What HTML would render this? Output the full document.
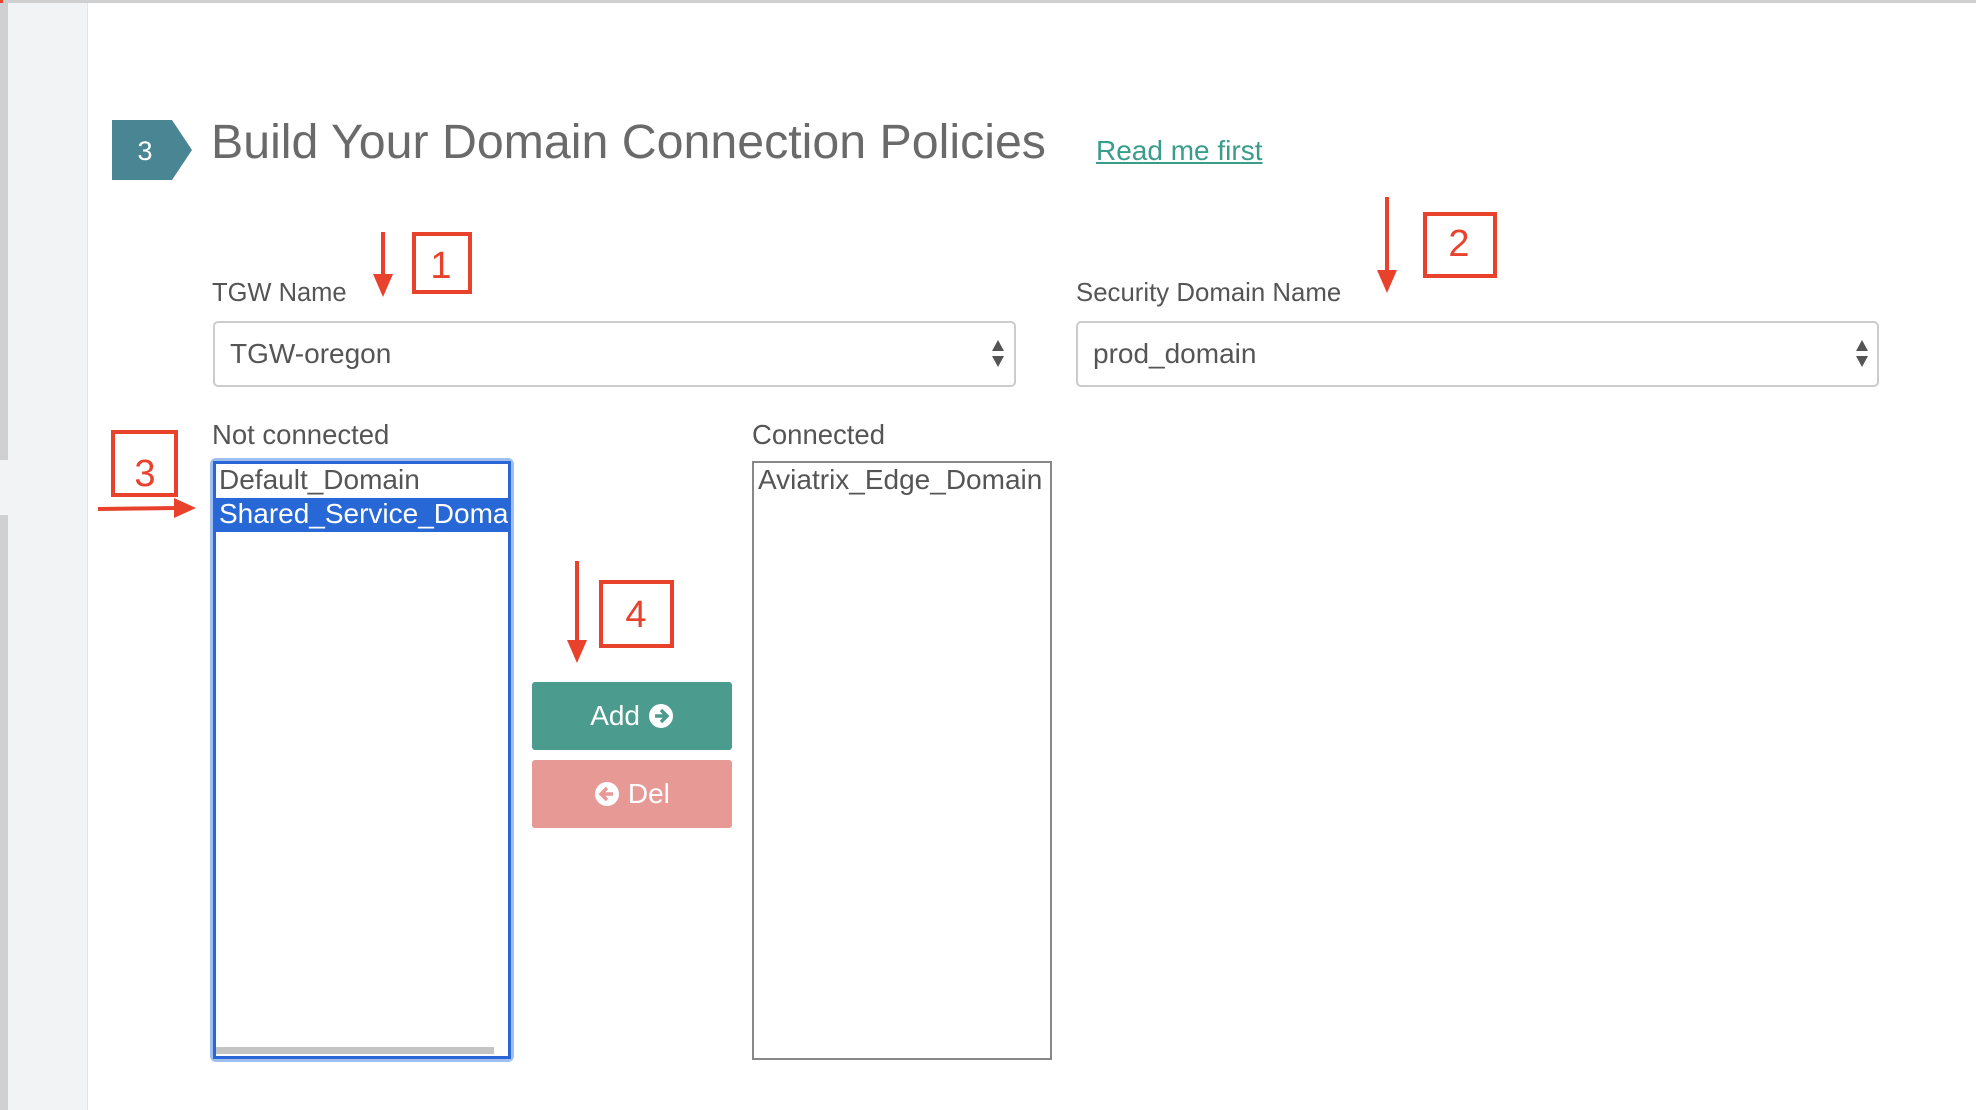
<!DOCTYPE html>
<html><head><meta charset="utf-8"><style>
*{margin:0;padding:0;box-sizing:border-box}
body{width:1976px;height:1110px;background:#fff;position:relative;overflow:hidden;font-family:"Liberation Sans",Helvetica,Arial,sans-serif;color:#555}
.a{position:absolute}
</style></head><body>
<div class="a" style="left:0;top:0;width:88px;height:1110px;background:#f2f3f5;border-right:1px solid #e4e4e4"></div>
<div class="a" style="left:0;top:0;width:8px;height:460px;background:#d0d0d2"></div>
<div class="a" style="left:0;top:515px;width:8px;height:595px;background:#d0d0d2"></div>
<div class="a" style="left:0;top:0;width:1976px;height:3px;background:#cfcfcf"></div>
<div class="a" style="left:0;top:0;width:3px;height:3px;background:#e8412c"></div>

<svg class="a" style="left:112px;top:120px" width="82" height="60"><polygon points="0,0 60,0 80,30 60,60 0,60" fill="#4a8594"/><text x="33" y="40" font-size="27" fill="#fff" text-anchor="middle" font-family="Liberation Sans">3</text></svg>
<div class="a" style="left:211px;top:114px;font-size:48.3px;color:#6a6a6a;white-space:nowrap;line-height:56px">Build Your Domain Connection Policies</div>
<div class="a" style="left:1096px;top:135px;font-size:28px;color:#3a9c8a;text-decoration:underline;line-height:32px">Read me first</div>

<div class="a" style="left:212px;top:279px;font-size:25.5px;color:#555">TGW Name</div>
<div class="a" style="left:1076px;top:279px;font-size:25.8px;color:#555">Security Domain Name</div>

<div class="a" style="left:213px;top:321px;width:803px;height:66px;border:2px solid #ccc;border-radius:5px"></div>
<div class="a" style="left:230px;top:338px;font-size:28px;color:#555">TGW-oregon</div>
<svg class="a" style="left:991px;top:339px" width="14" height="30"><polygon points="7,1 13,12 1,12" fill="#555"/><polygon points="1,17 13,17 7,28" fill="#555"/></svg>
<div class="a" style="left:1076px;top:321px;width:803px;height:66px;border:2px solid #ccc;border-radius:5px"></div>
<div class="a" style="left:1093px;top:338px;font-size:28px;color:#555">prod_domain</div>
<svg class="a" style="left:1855px;top:339px" width="14" height="30"><polygon points="7,1 13,12 1,12" fill="#555"/><polygon points="1,17 13,17 7,28" fill="#555"/></svg>

<div class="a" style="left:212px;top:419px;font-size:27.5px;color:#555">Not connected</div>
<div class="a" style="left:752px;top:419px;font-size:27.5px;color:#555">Connected</div>

<div class="a" style="left:210px;top:458px;width:304px;height:604px;border:4px solid #9fc0f0;border-radius:6px"></div>
<div class="a" style="left:213px;top:461px;width:298px;height:598px;border:3px solid #2a66d6;background:#fff;overflow:hidden">
 <div style="height:34px;font-size:28px;color:#555;padding-left:3px;line-height:32px;white-space:nowrap">Default_Domain</div>
 <div style="height:34px;font-size:28px;color:#fff;background:#2767d6;padding-left:3px;line-height:32px;white-space:nowrap">Shared_Service_Domain</div>
 <div class="a" style="left:0;bottom:2px;width:278px;height:7px;background:#c4c4c4"></div>
</div>

<div class="a" style="left:752px;top:461px;width:300px;height:599px;border:2px solid #888;background:#fff">
 <div style="font-size:28px;color:#555;padding-left:4px;line-height:32px;white-space:nowrap;padding-top:1px">Aviatrix_Edge_Domain</div>
</div>

<div class="a" style="left:532px;top:682px;width:200px;height:68px;background:#4b9b8e;border-radius:3px;color:#fff;font-size:28px;line-height:68px;text-align:center">Add <svg width="26" height="26" style="vertical-align:-4px" viewBox="0 0 26 26"><circle cx="13" cy="13" r="12" fill="#fff"/><path d="M7 13h11M13 7l6 6-6 6" stroke="#4b9b8e" stroke-width="3.5" fill="none"/></svg></div>
<div class="a" style="left:532px;top:760px;width:200px;height:68px;background:#e69995;border-radius:3px;color:#fff;font-size:28px;line-height:68px;text-align:center"><svg width="26" height="26" style="vertical-align:-4px" viewBox="0 0 26 26"><circle cx="13" cy="13" r="12" fill="#fff"/><path d="M19 13H8M13 7l-6 6 6 6" stroke="#e69995" stroke-width="3.5" fill="none"/></svg> Del</div>

<svg class="a" style="left:0;top:0" width="1976" height="1110">
 <g stroke="#e8412c" stroke-width="4" fill="none">
  <rect x="414" y="234" width="56" height="58"/>
  <rect x="1425" y="214" width="70" height="62"/>
  <rect x="113" y="432" width="63" height="63"/>
  <rect x="601" y="582" width="71" height="64"/>
  <line x1="383" y1="232" x2="383" y2="278"/>
  <line x1="1387" y1="197" x2="1387" y2="274"/>
  <line x1="98" y1="509" x2="178" y2="508"/>
  <line x1="577" y1="561" x2="577" y2="644"/>
 </g>
 <g fill="#e8412c">
  <polygon points="373,274 393,274 383,297"/>
  <polygon points="1377,270 1397,270 1387,293"/>
  <polygon points="174,498 174,518 196,508"/>
  <polygon points="567,640 587,640 577,663"/>
 </g>
 <g fill="#e8412c" font-family="Liberation Sans" font-size="38" text-anchor="middle">
  <text x="441" y="278">1</text>
  <text x="1459" y="256">2</text>
  <text x="145" y="486">3</text>
  <text x="636" y="627">4</text>
 </g>
</svg>
</body></html>
